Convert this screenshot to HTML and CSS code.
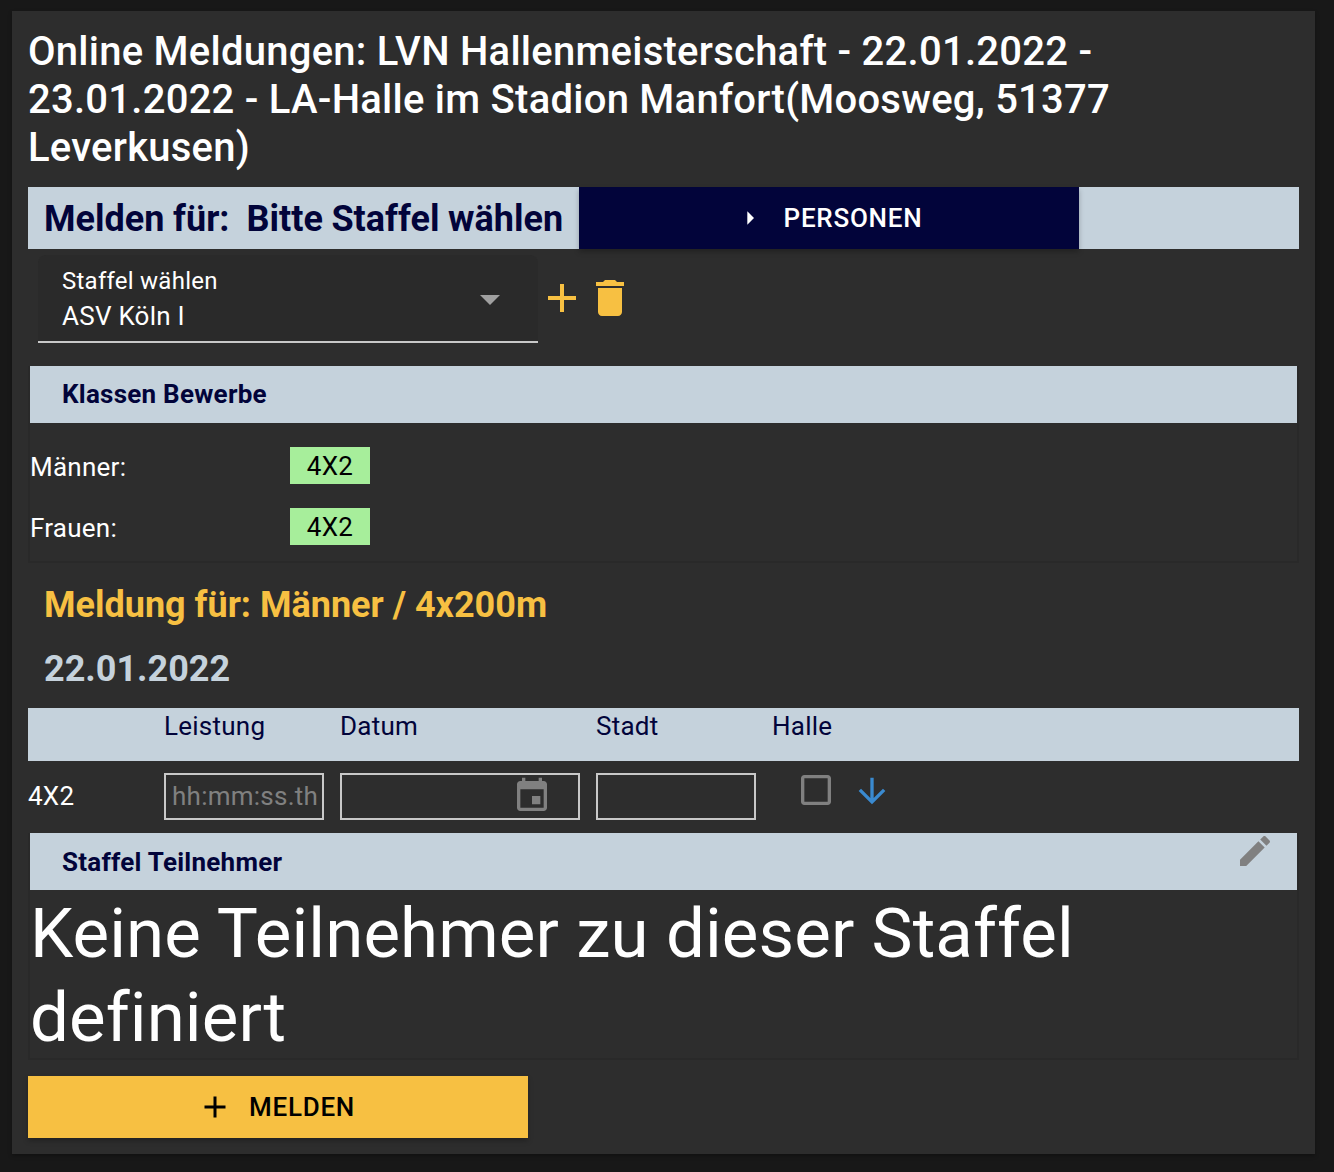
FILE: index.html
```html
<!DOCTYPE html>
<html lang="en">
<head>
    <meta charset="UTF-8">
    <meta name="viewport" content="width=device-width, initial-scale=1.0">
    <title>Online Meldungen</title>
    <link rel="stylesheet" href="styles.css">
</head>
<body>
    <div class="card">
        <h1 class="title">Online Meldungen: LVN Hallenmeisterschaft - 22.01.2022 - 23.01.2022 - LA-Halle im Stadion Manfort(Moosweg, 51377 Leverkusen)</h1>

        <div class="melden-bar">
            <div class="melden-label">Melden für:&nbsp; Bitte Staffel wählen</div>
            <button class="btn btn-navy">
                <svg class="caret" width="32" height="32" viewBox="0 0 24 24"><path d="M10 17l5-5-5-5z"/></svg>
                <span>PERSONEN</span>
            </button>
        </div>

        <div class="staffel-row">
            <div class="select">
                <div class="select-label">Staffel wählen</div>
                <div class="select-value">ASV Köln I</div>
                <svg class="select-arrow" width="48" height="48" viewBox="0 0 24 24"><path d="M7 10l5 5 5-5z"/></svg>
            </div>
            <svg class="action" width="48" height="48" viewBox="0 0 24 24"><path d="M19 13h-6v6h-2v-6H5v-2h6V5h2v6h6z"/></svg>
            <svg class="action" width="48" height="48" viewBox="0 0 24 24"><path d="M6 19c0 1.1.9 2 2 2h8c1.1 0 2-.9 2-2V7H6v12zM19 4h-3.5l-1-1h-5l-1 1H5v2h14V4z"/></svg>
        </div>

        <div class="panel">
            <div class="panel-head panel-head-first">Klassen Bewerbe</div>
            <div class="klasse-list">
                <div class="klasse-row">
                    <div class="klasse-name">Männer:</div>
                    <div class="badge">4X2</div>
                </div>
                <div class="klasse-row">
                    <div class="klasse-name">Frauen:</div>
                    <div class="badge">4X2</div>
                </div>
            </div>
        </div>

        <h2 class="meldung-title">Meldung für: Männer / 4x200m</h2>
        <h2 class="meldung-date">22.01.2022</h2>

        <div class="grid-head">
            <div></div>
            <div>Leistung</div>
            <div>Datum</div>
            <div>Stadt</div>
            <div>Halle</div>
        </div>
        <div class="grid-row">
            <div class="row-name">4X2</div>
            <div class="field field-hint">hh:mm:ss.th</div>
            <div class="field field-date">
                <svg class="calendar" width="40" height="40" viewBox="0 0 24 24"><path d="M17 12h-5v5h5v-5zM16 1v2H8V1H6v2H5c-1.11 0-1.99.9-1.99 2L3 19c0 1.1.89 2 2 2h14c1.1 0 2-.9 2-2V5c0-1.1-.9-2-2-2h-1V1h-2zm3 18H5V8h14v11z"/></svg>
            </div>
            <div class="field"></div>
            <div class="row-actions">
                <svg class="check" width="40" height="40" viewBox="0 0 24 24"><path d="M19 5v14H5V5h14m0-2H5c-1.1 0-2 .9-2 2v14c0 1.1.9 2 2 2h14c1.1 0 2-.9 2-2V5c0-1.1-.9-2-2-2z"/></svg>
                <svg class="arrow" width="40" height="40" viewBox="0 0 24 24"><path d="M20 12l-1.41-1.41L13 16.17V4h-2v12.17l-5.58-5.59L4 12l8 8 8-8z"/></svg>
            </div>
        </div>

        <div class="panel">
            <div class="panel-head">
                Staffel Teilnehmer
                <svg class="pencil" width="40" height="40" viewBox="0 0 24 24"><path d="M3 17.25V21h3.75L17.81 9.94l-3.75-3.75L3 17.25zM20.71 7.04c.39-.39.39-1.02 0-1.41l-2.34-2.34c-.39-.39-1.02-.39-1.41 0l-1.83 1.83 3.75 3.75 1.83-1.83z"/></svg>
            </div>
            <div class="empty-text">Keine Teilnehmer zu dieser Staffel definiert</div>
        </div>

        <button class="btn btn-yellow">
            <svg width="36" height="36" viewBox="0 0 24 24"><path d="M19 13h-6v6h-2v-6H5v-2h6V5h2v6h6z"/></svg>
            <span>MELDEN</span>
        </button>
    </div>
</body>
</html>
```

FILE: styles.css
```css
* {
    margin: 0;
    padding: 0;
    box-sizing: border-box;
}

body {
    font-family: Roboto, "Liberation Sans", sans-serif;
    background: #181818;
    color: #fff;
    padding: 11px 19px 0 12px;
    min-height: 100vh;
}

.card {
    background: #2d2d2d;
    padding: 17px 16px 16px;
    height: 1143px;
    box-shadow: 0 2px 4px rgba(0, 0, 0, 0.3);
}

.title {
    font-size: 40px;
    line-height: 48px;
    font-weight: 500;
    letter-spacing: 0.25px;
    padding-right: 150px;
    margin-bottom: 15px;
}

.btn {
    display: flex;
    align-items: center;
    justify-content: center;
    width: 500px;
    height: 62px;
    border: 0;
    font-family: inherit;
    font-size: 26px;
    font-weight: 500;
    letter-spacing: 0.75px;
    box-shadow: 0 3px 5px rgba(0, 0, 0, 0.25);
}

.btn-navy {
    background: #02043a;
    color: #fff;
    padding-right: 2px;
}

.btn-navy svg {
    fill: #fff;
    margin-right: 18px;
}

.btn-yellow {
    background: #f7c042;
    color: #000;
    margin-top: 16px;
    padding-right: 4px;
}

.btn-yellow svg {
    margin-right: 16px;
}

.melden-bar {
    display: flex;
    align-items: center;
    height: 62px;
    background: #c5d2dc;
}

.melden-label {
    width: 551px;
    padding: 1px 0 0 16px;
    font-size: 36px;
    font-weight: 700;
    letter-spacing: 0.03px;
    word-spacing: -0.5px;
    color: #02043a;
    white-space: nowrap;
}

.staffel-row {
    display: flex;
    align-items: center;
    height: 94px;
    padding: 6px 0 0 10px;
}

.select {
    position: relative;
    width: 500px;
    height: 88px;
    padding: 9px 24px 0;
    background: #2a2a2a;
    border-bottom: 2px solid #c8c8c8;
    border-radius: 8px 8px 0 0;
    font-size: 24px;
    letter-spacing: 0.25px;
}

.select-label {
    line-height: 34px;
}

.select-value {
    font-size: 26px;
    line-height: 36px;
}

.select-arrow {
    position: absolute;
    right: 24px;
    top: 20px;
    fill: #a0a0a0;
}

.action {
    fill: #f7c042;
    margin-top: -2px;
}

.panel {
    border: 2px solid #292929;
    border-top: 0;
}

.staffel-row + .panel {
    margin-top: 23px;
}

.panel-head {
    position: relative;
    display: flex;
    align-items: center;
    height: 57px;
    padding-left: 32px;
    background: #c5d2dc;
    color: #02043a;
    font-size: 26px;
    font-weight: 700;
    letter-spacing: 0.25px;
}

.panel-head-first {
    padding-bottom: 2px;
}

.pencil {
    position: absolute;
    right: 22px;
    top: -2px;
    fill: #808080;
}

.klasse-list {
    padding: 24px 0 16px;
}

.klasse-row {
    display: flex;
    align-items: center;
    height: 37px;
    margin-bottom: 24px;
    font-size: 26px;
    letter-spacing: 0.25px;
}

.klasse-row:last-child {
    margin-bottom: 0;
}

.klasse-name {
    width: 260px;
    padding-top: 2px;
}

.badge {
    width: 80px;
    height: 37px;
    line-height: 39px;
    text-align: center;
    background: #a7ee9b;
    color: #000;
}

.meldung-title,
.meldung-date {
    padding-left: 16px;
    font-size: 36px;
    line-height: 48px;
    font-weight: 700;
}

.meldung-title {
    color: #f7c042;
    margin-top: 18px;
}

.meldung-date {
    color: #c5d2dc;
    margin-top: 16px;
    margin-bottom: 15px;
}

.grid-head,
.grid-row {
    display: grid;
    grid-template-columns: 136px 176px 256px 176px 1fr;
    font-size: 26px;
    letter-spacing: 0.25px;
}

.grid-head {
    height: 53px;
    background: #c5d2dc;
    color: #02043a;
    line-height: 36px;
}

.grid-row {
    align-items: start;
    height: 72px;
}

.row-name {
    margin-top: 20px;
}

.field {
    position: relative;
    height: 47px;
    width: 160px;
    margin-top: 12px;
    border: 2px solid #c8c8c8;
}

.field-hint {
    padding-left: 6px;
    line-height: 43px;
    color: #808080;
    white-space: nowrap;
    overflow: hidden;
}

.field-date {
    width: 240px;
}

.calendar {
    position: absolute;
    right: 26px;
    top: 1px;
    fill: #808080;
}

.row-actions {
    display: flex;
    gap: 16px;
    margin-top: 10px;
    padding-left: 24px;
}

.check {
    fill: #808080;
    margin-top: -1px;
}

.arrow {
    fill: #3a8ad0;
}

.empty-text {
    padding-top: 2px;
    margin-bottom: -2px;
    font-size: 69px;
    line-height: 84px;
    letter-spacing: 0.1px;
}
```
